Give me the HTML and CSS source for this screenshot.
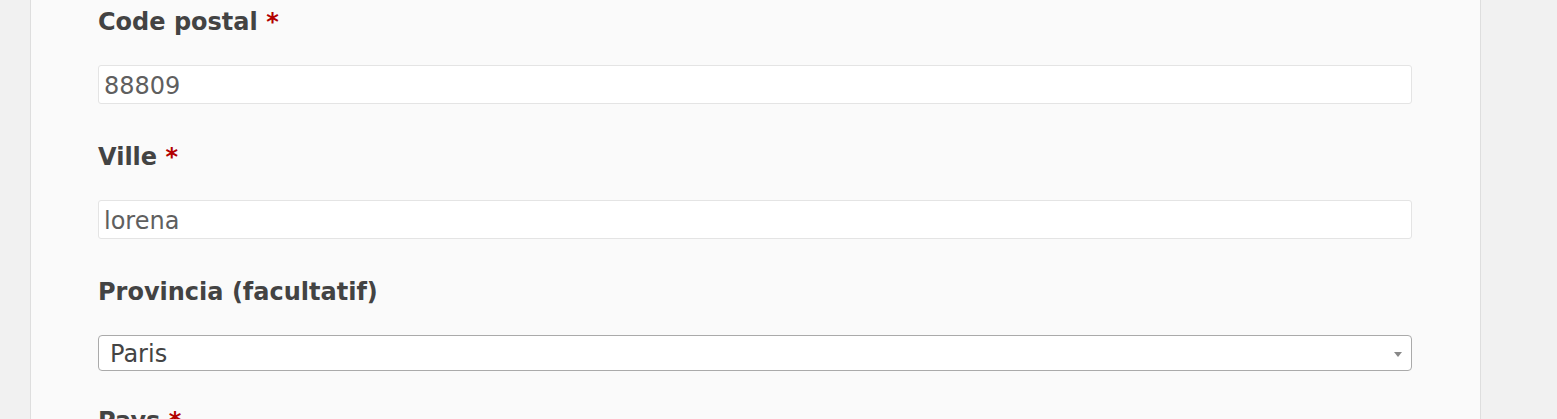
FILE: index.html
```html
<!DOCTYPE html>
<html lang="fr">
<head>
<meta charset="utf-8">
<title>Adresse</title>
<link rel="stylesheet" href="styles.css">
</head>
<body>
<div class="panel">
  <form class="form">
    <div class="group">
      <label class="label" for="zip">Code postal <abbr class="req">*</abbr></label>
      <input class="input" id="zip" type="text" value="88809">
    </div>
    <div class="group">
      <label class="label" for="city">Ville <abbr class="req">*</abbr></label>
      <input class="input" id="city" type="text" value="lorena">
    </div>
    <div class="group group-select">
      <label class="label">Provincia (facultatif)</label>
      <div class="select" role="combobox">
        <span class="select-value">Paris</span>
        <span class="select-arrow"></span>
      </div>
    </div>
    <div class="group">
      <label class="label">Pays <abbr class="req">*</abbr></label>
    </div>
  </form>
</div>
</body>
</html>
```

FILE: styles.css
```css
html, body {
  margin: 0;
  padding: 0;
}
body {
  background: #f1f1f1;
  font-family: "DejaVu Sans", Verdana, sans-serif;
  height: 419px;
  overflow: hidden;
}
.panel {
  margin-left: 30px;
  min-height: 419px;
  box-sizing: border-box;
  width: 1451px;
  background: #fafafa;
  border-left: 1px solid #dedede;
  border-right: 1px solid #dedede;
  padding: 4px 68px 0 67px;
}
.form {
  display: flex;
  flex-direction: column;
}
.group {
  display: flex;
  flex-direction: column;
  margin-bottom: 35px;
}
.group-select {
  margin-bottom: 32px;
}
.label {
  font-size: 24px;
  font-weight: bold;
  line-height: 36px;
  color: #434343;
  margin-bottom: 25px;
}
.req {
  color: #b20000;
  text-decoration: none;
  border: none;
}
.input {
  box-sizing: border-box;
  height: 39px;
  width: 100%;
  margin: 0;
  border: 1px solid #e4e4e4;
  border-radius: 3px;
  background: #fff;
  padding: 2px 5px 0;
  font-family: "DejaVu Sans", Verdana, sans-serif;
  font-size: 24px;
  color: #5f5f5f;
  outline: none;
}
.select {
  box-sizing: border-box;
  height: 36px;
  width: 100%;
  border: 1px solid #aaaaaa;
  border-radius: 4px;
  background: #fff;
  display: flex;
  align-items: center;
  justify-content: space-between;
  padding: 1px 9px 0 11px;
}
.select-value {
  font-size: 24px;
  color: #444;
  line-height: 34px;
}
.select-arrow {
  width: 0;
  height: 0;
  border-style: solid;
  border-width: 5px 4.5px 0 4.5px;
  border-color: #888 transparent transparent transparent;
  margin-top: 2px;
}
```
